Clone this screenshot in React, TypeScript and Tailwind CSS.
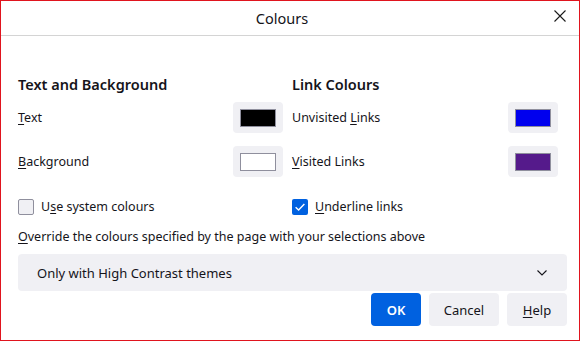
import React from 'react';

const Key: React.FC<{ children: React.ReactNode }> = ({ children }) => (
  <span className="underline underline-offset-2 decoration-1">{children}</span>
);

const Swatch: React.FC<{ color: string }> = ({ color }) => (
  <button className="flex h-[31px] w-[50px] items-center justify-center rounded-[4px] bg-[#f0f0f4]">
    <span className="block h-[18px] w-[36px] border border-[#8f8f9d]" style={{ backgroundColor: color }} />
  </button>
);

const ColorRow: React.FC<{ label: React.ReactNode; color: string }> = ({ label, color }) => (
  <div className="flex h-[31px] items-center justify-between">
    <span>{label}</span>
    <Swatch color={color} />
  </div>
);

const Check: React.FC<{ checked?: boolean; label: React.ReactNode }> = ({ checked, label }) => (
  <label className="flex h-[20px] items-center gap-[7px]">
    {checked ? (
      <span className="flex h-[16px] w-[16px] items-center justify-center rounded-[2px] bg-[#0061e0]">
        <svg viewBox="0 0 16 16" className="h-[14px] w-[14px]">
          <path d="M3 8.2 L6.4 11.5 L13 4.5" fill="none" stroke="#fff" strokeWidth="1.6" />
        </svg>
      </span>
    ) : (
      <span className="block h-[16px] w-[16px] rounded-[2px] border border-[#8f8f9d] bg-[#f0f0f4]" />
    )}
    <span>{label}</span>
  </label>
);

export default function App() {
  return (
    <div className="h-[342px] w-[581px] bg-white text-[12.5px] leading-[20px] text-[#15141a]" style={{ fontFamily: '"Noto Sans", sans-serif' }}>
      <div className="flex h-[341px] w-[580px] flex-col border border-[#e0141e]">
        {/* title bar */}
        <div className="relative flex h-[35px] shrink-0 items-center justify-center border-b border-[#d4d4d4]">
          <span className="pr-[16px] text-[14.5px]">Colours</span>
          <svg viewBox="0 0 12 12" className="absolute right-[13px] top-[9px] h-[12px] w-[12px]">
            <path d="M0.5 0.5 L11.5 11.5 M11.5 0.5 L0.5 11.5" stroke="#1a1a1a" strokeWidth="1.1" />
          </svg>
        </div>

        <div className="flex flex-col pl-[17px] pr-[12px] pt-[38px]">
          <div className="flex gap-[9px]">
            <div className="flex w-[265px] flex-col">
              <h2 className="text-[14.5px] font-semibold">Text and Background</h2>
              <div className="mt-[8px] flex flex-col gap-[13px]">
                <ColorRow label={<><Key>T</Key>ext</>} color="#000000" />
                <ColorRow label={<><Key>B</Key>ackground</>} color="#ffffff" />
              </div>
              <div className="mt-[20px]">
                <Check label={<>U<Key>s</Key>e system colours</>} />
              </div>
            </div>
            <div className="flex w-[266px] flex-col">
              <h2 className="text-[14.5px] font-semibold">Link Colours</h2>
              <div className="mt-[8px] flex flex-col gap-[13px]">
                <ColorRow label={<>Unvisited <Key>L</Key>inks</>} color="#0000ee" />
                <ColorRow label={<><Key>V</Key>isited Links</>} color="#551a8b" />
              </div>
              <div className="mt-[20px]">
                <Check checked label={<><Key>U</Key>nderline links</>} />
              </div>
            </div>
          </div>

          <div className="mt-[10px]">
            <Key>O</Key>verride the colours specified by the page with your selections above
          </div>

          <div className="mt-[7px] flex h-[37px] items-center justify-between rounded-[4px] bg-[#f0f0f4] pl-[19px] pr-[20px] text-[13px]">
            <span>Only with High Contrast themes</span>
            <svg viewBox="0 0 10 6" className="h-[6px] w-[10px]">
              <path d="M0.5 0.5 L5 5 L9.5 0.5" fill="none" stroke="#15141a" strokeWidth="1.1" />
            </svg>
          </div>

          <div className="mt-[2px] flex justify-end gap-[8px] text-[13px]">
            <button className="h-[33px] w-[50px] rounded-[4px] bg-[#0061e0] font-semibold text-white">OK</button>
            <button className="h-[33px] w-[70px] rounded-[4px] bg-[#f0f0f4]">Cancel</button>
            <button className="h-[33px] w-[60px] rounded-[4px] bg-[#f0f0f4]">
              <Key>H</Key>elp
            </button>
          </div>
        </div>
      </div>
    </div>
  );
}
